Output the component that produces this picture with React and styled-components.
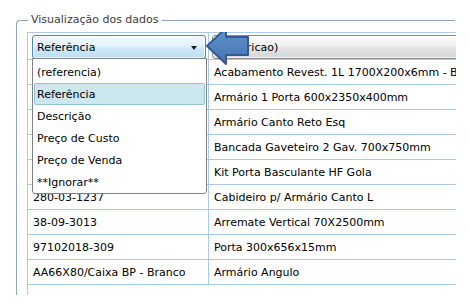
import styled, { createGlobalStyle } from "styled-components";

const Global = createGlobalStyle`
  body {
    margin: 0;
    background: #fff;
    font-family: "DejaVu Sans", Verdana, sans-serif;
    font-size: 11px;
    color: #000;
  }
`;

const Panel = styled.div`
  box-sizing: border-box;
  width: 439px;
  height: 275px;
  margin: 20px 0 0 16px;
  border-top: 1px solid #8ea5c2;
  border-left: 1px solid #8ea5c2;
  border-top-left-radius: 4px;
  display: flex;
  flex-direction: column;
`;

const Legend = styled.div`
  align-self: flex-start;
  height: 14px;
  line-height: 14px;
  margin: -8px 0 0 11px;
  padding: 0 3px;
  background: #fff;
  color: #3c3c3c;
`;

const Table = styled.div`
  position: relative;
  flex: 1;
  width: 428px;
  margin: 5px 0 0 10px;
  border-left: 1px solid #a9c9ef;
  overflow: hidden;
`;

const Row = styled.div`
  box-sizing: border-box;
  display: grid;
  grid-template-columns: 181px 1fr;
  height: ${(p) => (p.$head ? "28px" : "25px")};
  border-top: ${(p) => (p.$head ? "1px solid #a9c9ef" : "none")};
  border-bottom: 1px solid #a9c9ef;
`;

const Cell = styled.div`
  box-sizing: border-box;
  display: flex;
  align-items: center;
  padding-left: 5px;
  white-space: nowrap;
  border-right: ${(p) => (p.$first ? "1px solid #a9c9ef" : "none")};
`;

const HeadCell = styled.div`
  position: relative;
  box-sizing: border-box;
  padding: 2px 0 0 ${(p) => (p.$first ? "4px" : "3px")};
  border-right: ${(p) => (p.$first ? "1px solid #a9c9ef" : "none")};
`;

const Combo = styled.div`
  position: relative;
  box-sizing: border-box;
  width: ${(p) => (p.$active ? "174px" : "300px")};
  height: 24px;
  display: flex;
  align-items: center;
  padding-left: 4px;
  border-radius: 3px;
  border: 1px solid ${(p) => (p.$active ? "#4f8ab8" : "#8a8a8a")};
  background: ${(p) =>
    p.$active
      ? "linear-gradient(#f2f9fd, #e3f2fb 45%, #cfe8f7 55%, #bcdff3)"
      : "linear-gradient(#fbfbfb, #f0f0f0 45%, #e2e2e2 55%, #d7d7d7)"};
  box-shadow: inset 0 0 0 1px rgba(255, 255, 255, 0.7);
  white-space: nowrap;
`;

const Caret = styled.span`
  position: absolute;
  right: 8px;
  top: 10px;
  width: 0;
  height: 0;
  border-left: 3.5px solid transparent;
  border-right: 3.5px solid transparent;
  border-top: 4px solid #1a1a1a;
`;

const Popup = styled.div`
  position: absolute;
  left: -1px;
  top: 100%;
  z-index: 2;
  box-sizing: border-box;
  width: 175px;
  padding: 2px 0 0;
  background: #fff;
  border: 1px solid #7f8388;
  border-radius: 0 0 3px 3px;
`;

const Item = styled.div`
  box-sizing: border-box;
  height: 22px;
  margin: 0 1px;
  padding-left: 2px;
  display: flex;
  align-items: center;
  border-radius: 2px;
  border: 1px solid ${(p) => (p.$sel ? "#92c3d6" : "transparent")};
  background: ${(p) => (p.$sel ? "#cde7ef" : "transparent")};
`;

const Pointer = styled.svg`
  position: absolute;
  left: 176px;
  top: -6px;
  z-index: 3;
`;

const options = [
  "(referencia)",
  "Referência",
  "Descrição",
  "Preço de Custo",
  "Preço de Venda",
  "**Ignorar**",
];

const rows = [
  ["10-02-1700", "Acabamento Revest. 1L 1700X200x6mm - Branco"],
  ["20-01-0600", "Armário 1 Porta 600x2350x400mm"],
  ["20-04-0100", "Armário Canto Reto Esq"],
  ["30-02-0700", "Bancada Gaveteiro 2 Gav. 700x750mm"],
  ["40-11-0500", "Kit Porta Basculante HF Gola"],
  ["280-03-1237", "Cabideiro p/ Armário Canto L"],
  ["38-09-3013", "Arremate Vertical 70X2500mm"],
  ["97102018-309", "Porta 300x656x15mm"],
  ["AA66X80/Caixa BP - Branco", "Armário Angulo"],
];

export default function App() {
  return (
    <>
      <Global />
      <Panel>
        <Legend>Visualização dos dados</Legend>
        <Table>
          <Row $head>
            <HeadCell $first>
              <Combo $active>
                Referência
                <Caret />
                <Popup>
                  {options.map((o) => (
                    <Item key={o} $sel={o === "Referência"}>
                      {o}
                    </Item>
                  ))}
                </Popup>
              </Combo>
            </HeadCell>
            <HeadCell>
              <Combo>(descricao)</Combo>
            </HeadCell>
          </Row>
          {rows.map(([ref, desc]) => (
            <Row key={ref}>
              <Cell $first>{ref}</Cell>
              <Cell>{desc}</Cell>
            </Row>
          ))}
          <Pointer width="50" height="42" viewBox="0 0 50 42">
            <defs>
              <linearGradient id="arw" x1="0" y1="0" x2="0" y2="1">
                <stop offset="0" stopColor="#6893cc" />
                <stop offset="1" stopColor="#4272b0" />
              </linearGradient>
            </defs>
            <path
              d="M3 20 L22 2 L22 11 L44 11 L44 29 L22 29 L22 38 Z"
              fill="url(#arw)"
              stroke="#2f5a92"
              strokeWidth="2"
              strokeLinejoin="round"
            />
          </Pointer>
        </Table>
      </Panel>
    </>
  );
}
